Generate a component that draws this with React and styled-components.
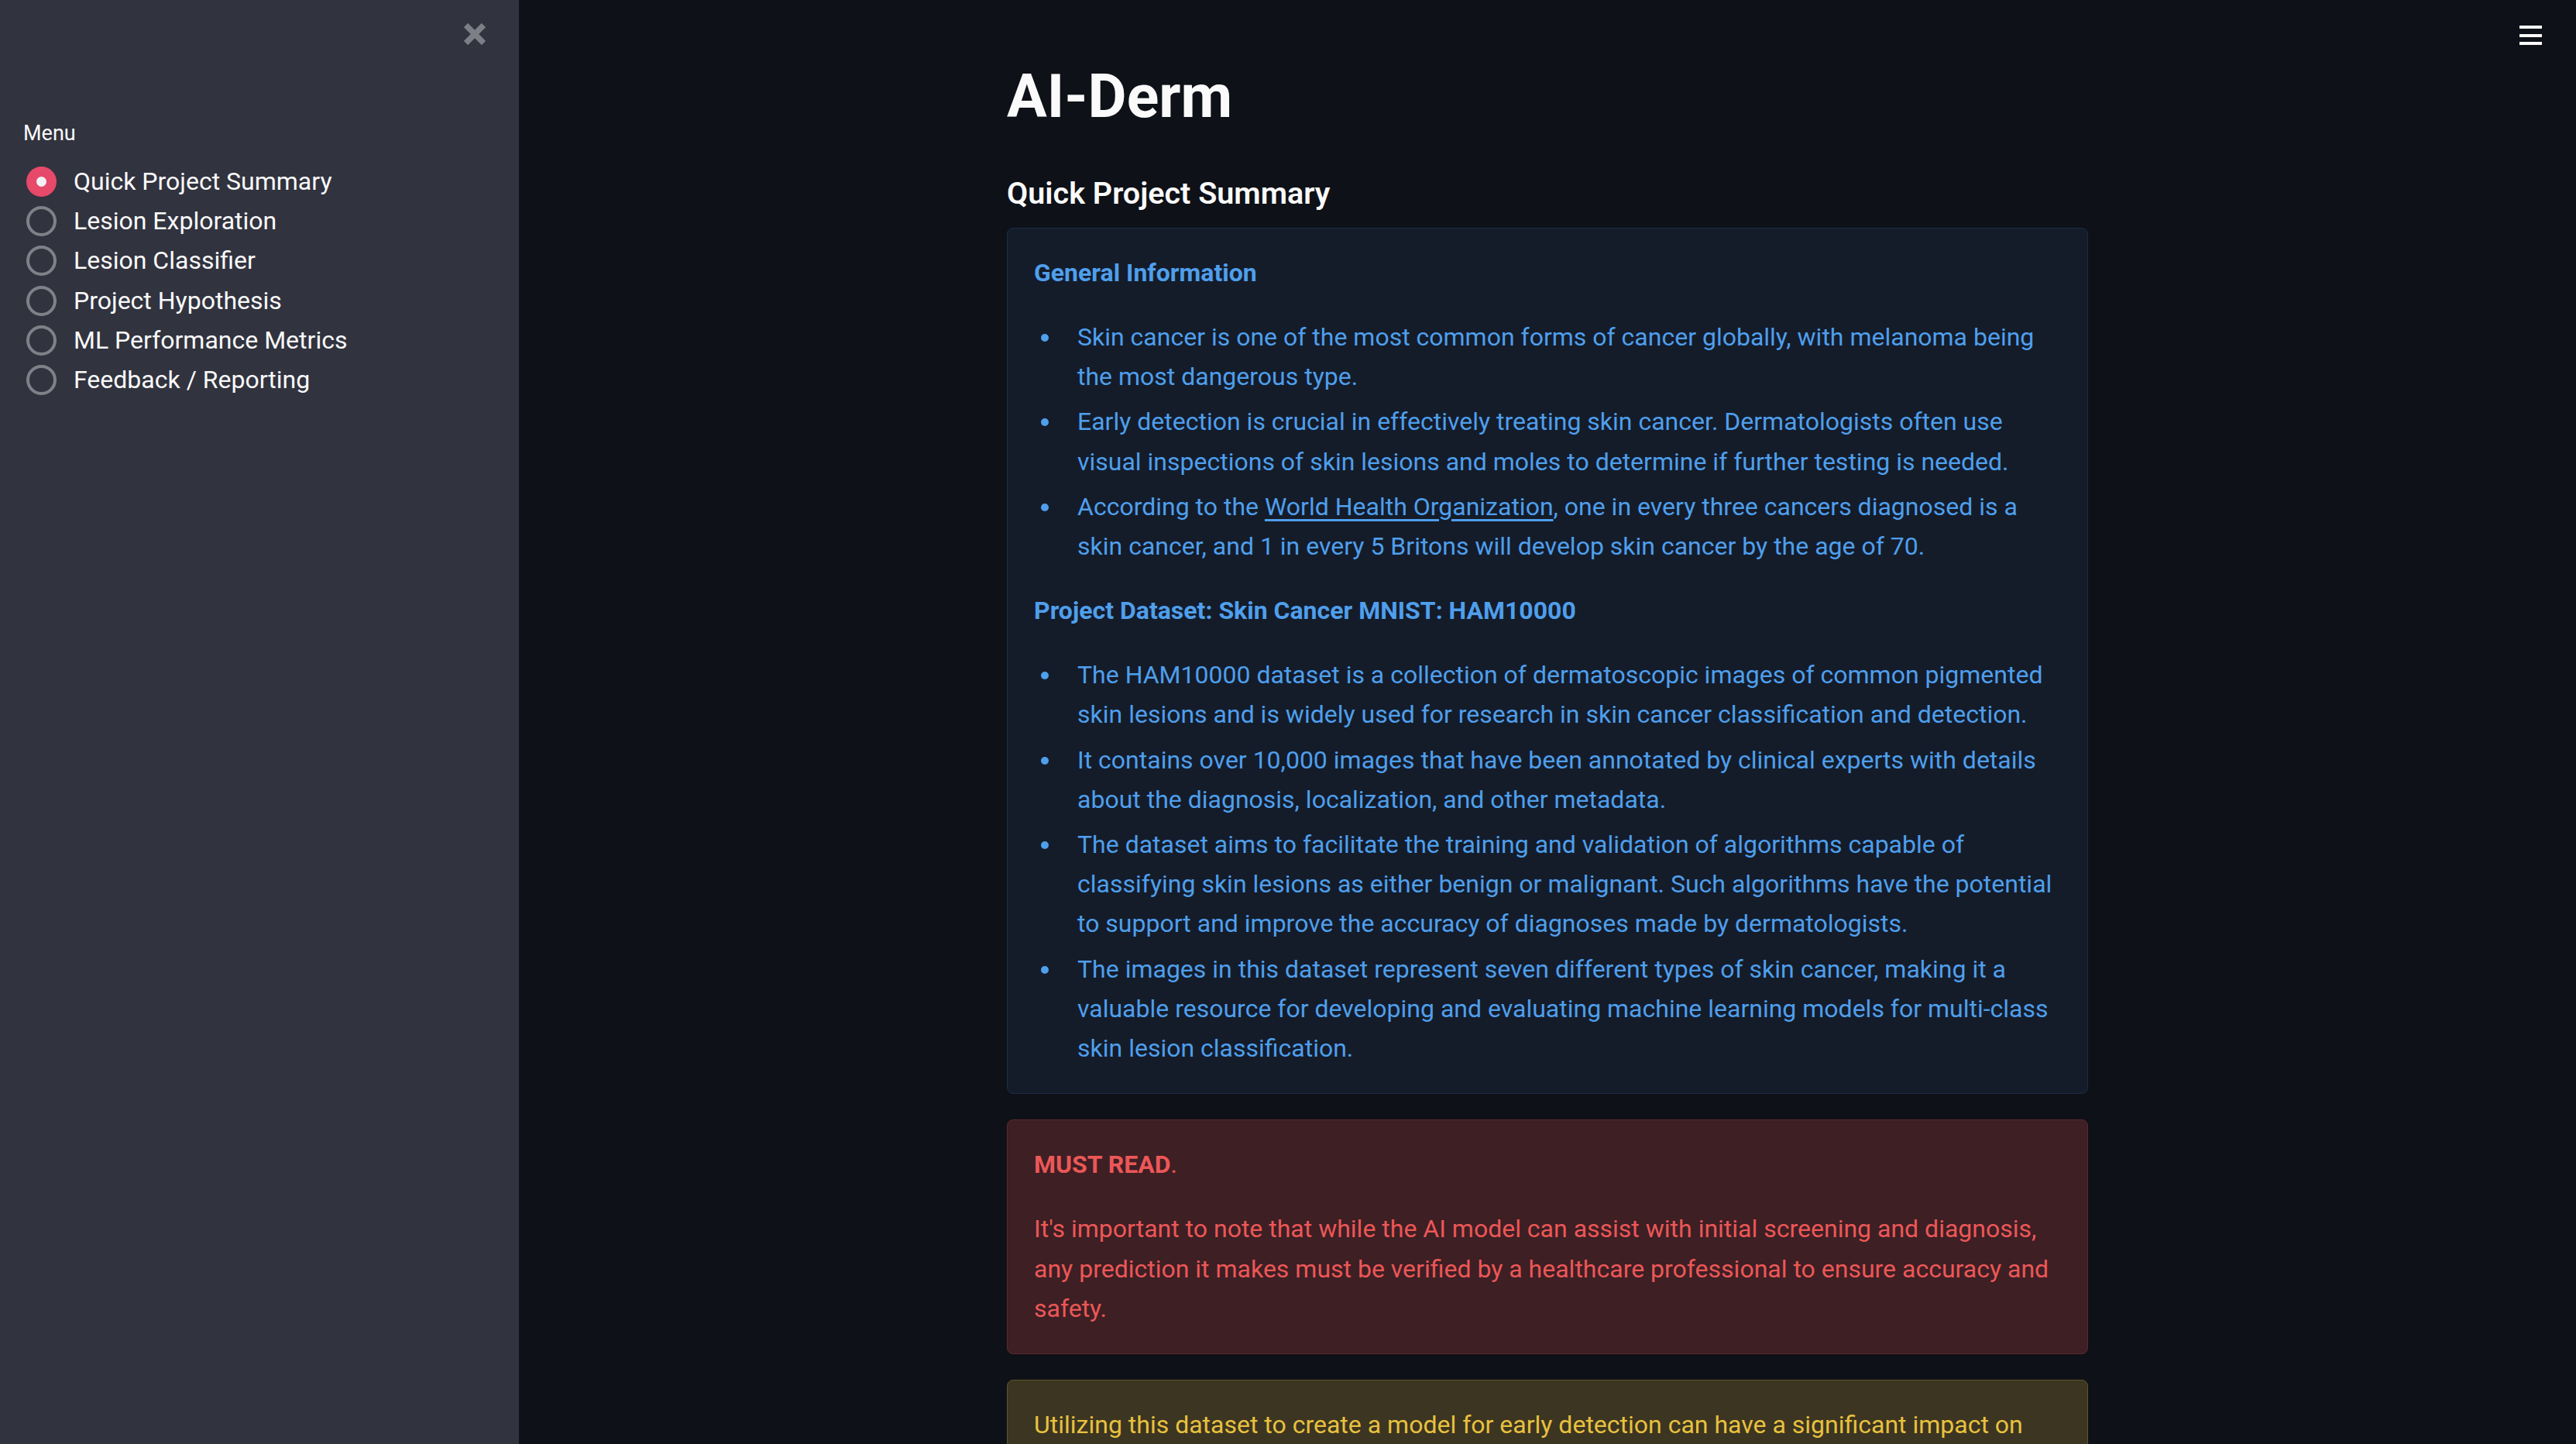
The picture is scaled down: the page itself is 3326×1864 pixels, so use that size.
import styled, { createGlobalStyle } from "styled-components";

const GlobalStyle = createGlobalStyle`
  html, body {
    margin: 0;
    padding: 0;
    background: #0e1117;
  }
  body {
    font-family: Roboto, "Liberation Sans", sans-serif;
    color: #fafafa;
  }
  * {
    box-sizing: border-box;
  }
`;

const menuItems = [
  "Quick Project Summary",
  "Lesion Exploration",
  "Lesion Classifier",
  "Project Hypothesis",
  "ML Performance Metrics",
  "Feedback / Reporting",
];

const App = () => {
  return (
    <>
      <GlobalStyle />
      <AppShell>
        <Sidebar>
          <CloseRow>
            <CloseBtn aria-label="Close sidebar">
              <svg width="28" height="28" viewBox="0 0 28 28">
                <path
                  d="M2.5 2.5 L25.5 25.5 M25.5 2.5 L2.5 25.5"
                  stroke="currentColor"
                  strokeWidth="7.5"
                  strokeLinecap="butt"
                />
              </svg>
            </CloseBtn>
          </CloseRow>
          <MenuLabel>Menu</MenuLabel>
          <RadioList>
            {menuItems.map((item, i) => (
              <RadioItem key={item}>
                <RadioDot $checked={i === 0} />
                <RadioText>{item}</RadioText>
              </RadioItem>
            ))}
          </RadioList>
        </Sidebar>

        <Main>
          <TopBar>
            <MenuBtn aria-label="Main menu">
              <span />
              <span />
              <span />
            </MenuBtn>
          </TopBar>
          <Block>
            <Title>AI-Derm</Title>
            <SubHeader>Quick Project Summary</SubHeader>

            <Alert $kind="info">
              <Para>
                <strong>General Information</strong>
              </Para>
              <List>
                <li>
                  Skin cancer is one of the most common forms of cancer
                  globally, with melanoma being the most dangerous type.
                </li>
                <li>
                  Early detection is crucial in effectively treating skin
                  cancer. Dermatologists often use visual inspections of skin
                  lesions and moles to determine if further testing is needed.
                </li>
                <li>
                  According to the <Link href="#">World Health Organization</Link>,
                  one in every three cancers diagnosed is a skin cancer, and 1
                  in every 5 Britons will develop skin cancer by the age of 70.
                </li>
              </List>
              <Para>
                <strong>Project Dataset: Skin Cancer MNIST: HAM10000</strong>
              </Para>
              <List>
                <li>
                  The HAM10000 dataset is a collection of dermatoscopic images
                  of common pigmented skin lesions and is widely used for
                  research in skin cancer classification and detection.
                </li>
                <li>
                  It contains over 10,000 images that have been annotated by
                  clinical experts with details about the diagnosis,
                  localization, and other metadata.
                </li>
                <li>
                  The dataset aims to facilitate the training and validation of
                  algorithms capable of classifying skin lesions as either
                  benign or malignant. Such algorithms have the potential to
                  support and improve the accuracy of diagnoses made by
                  dermatologists.
                </li>
                <li>
                  The images in this dataset represent seven different types of
                  skin cancer, making it a valuable resource for developing and
                  evaluating machine learning models for multi-class skin
                  lesion classification.
                </li>
              </List>
            </Alert>

            <Alert $kind="error">
              <Para>
                <strong>MUST READ</strong>.
              </Para>
              <Para>
                It's important to note that while the AI model can assist with
                initial screening and diagnosis, any prediction it makes must
                be verified by a healthcare professional to ensure accuracy
                and safety.
              </Para>
            </Alert>

            <Alert $kind="warning">
              <Para>
                Utilizing this dataset to create a model for early detection
                can have a significant impact on patient outcomes, as skin
                cancers found early are far easier to treat successfully.
              </Para>
            </Alert>
          </Block>
        </Main>
      </AppShell>
    </>
  );
};

export default App;

const alertColors = {
  info: { bg: "#141c2a", border: "#1c2d45", text: "#4f9fec" },
  error: { bg: "#3d1f24", border: "#5a2a2f", text: "#ec5757" },
  warning: { bg: "#3c3521", border: "#5e5428", text: "#e8c13f" },
};

const AppShell = styled.div`
  display: flex;
  height: 100vh;
  overflow: hidden;
  background: #0e1117;
`;

const Sidebar = styled.aside`
  width: 670px;
  flex-shrink: 0;
  background: #31333f;
  padding: 30px 43px 0 30px;
  display: flex;
  flex-direction: column;
`;

const CloseRow = styled.div`
  display: flex;
  justify-content: flex-end;
`;

const CloseBtn = styled.button`
  width: 28px;
  height: 28px;
  padding: 0;
  border: none;
  background: transparent;
  color: #7d7f87;
  display: flex;
  cursor: pointer;
`;

const MenuLabel = styled.div`
  margin-top: 96px;
  font-size: 27px;
  line-height: 36px;
  color: #fafafa;
`;

const RadioList = styled.div`
  margin-top: 19px;
  display: flex;
  flex-direction: column;
`;

const RadioItem = styled.label`
  display: flex;
  align-items: center;
  height: 51.2px;
  gap: 22px;
  padding-left: 4px;
  cursor: pointer;
`;

const RadioDot = styled.span`
  width: 39px;
  height: 39px;
  border-radius: 50%;
  flex-shrink: 0;
  position: relative;
  background: ${(p) => (p.$checked ? "#e6496a" : "transparent")};
  border: ${(p) => (p.$checked ? "none" : "4px solid #7f8189")};

  &::after {
    content: "";
    display: ${(p) => (p.$checked ? "block" : "none")};
    position: absolute;
    left: 50%;
    top: 50%;
    width: 13px;
    height: 13px;
    margin: -6.5px 0 0 -6.5px;
    border-radius: 50%;
    background: #f0f2f6;
  }
`;

const RadioText = styled.span`
  font-size: 32px;
  line-height: 1.6;
  color: #fafafa;
`;

const Main = styled.main`
  flex: 1;
  min-width: 0;
  overflow: auto;
  display: flex;
  flex-direction: column;
`;

const TopBar = styled.div`
  display: flex;
  justify-content: flex-end;
  height: 79px;
  padding: 33px 44px 0 0;
  flex-shrink: 0;
`;

const MenuBtn = styled.button`
  width: 29px;
  height: 25px;
  padding: 0;
  border: none;
  background: transparent;
  display: flex;
  flex-direction: column;
  justify-content: space-between;
  cursor: pointer;

  span {
    display: block;
    height: 4px;
    background: #fafafa;
  }
`;

const Block = styled.div`
  width: 1396px;
  margin: 0 auto;
  display: flex;
  flex-direction: column;
  padding-bottom: 200px;
`;

const Title = styled.h1`
  margin: 0;
  font-size: 77px;
  line-height: 1.2;
  font-weight: 700;
  color: #fafafa;
`;

const SubHeader = styled.h3`
  margin: 55px 0 20px;
  font-size: 39.5px;
  line-height: 1.2;
  font-weight: 600;
  color: #fafafa;
`;

const Alert = styled.div`
  background: ${(p) => alertColors[p.$kind].bg};
  border: 1px solid ${(p) => alertColors[p.$kind].border};
  color: ${(p) => alertColors[p.$kind].text};
  border-radius: 8px;
  padding: 32px 32px 32px 34px;
  font-size: 32px;
  line-height: 1.6;

  & + & {
    margin-top: 33px;
  }

  & > *:last-child {
    margin-bottom: 0;
  }
`;

const Para = styled.p`
  margin: 0 0 32px;

  strong {
    font-weight: 700;
  }
`;

const List = styled.ul`
  margin: 0 0 32px;
  padding-left: 56px;
  list-style: none;

  li {
    position: relative;
  }

  li + li {
    margin-top: 7px;
  }

  li::before {
    content: "";
    position: absolute;
    left: -47px;
    top: 21px;
    width: 10px;
    height: 10px;
    border-radius: 50%;
    background: currentColor;
  }
`;

const Link = styled.a`
  color: inherit;
  text-decoration: underline;
  text-underline-offset: 5px;
`;
